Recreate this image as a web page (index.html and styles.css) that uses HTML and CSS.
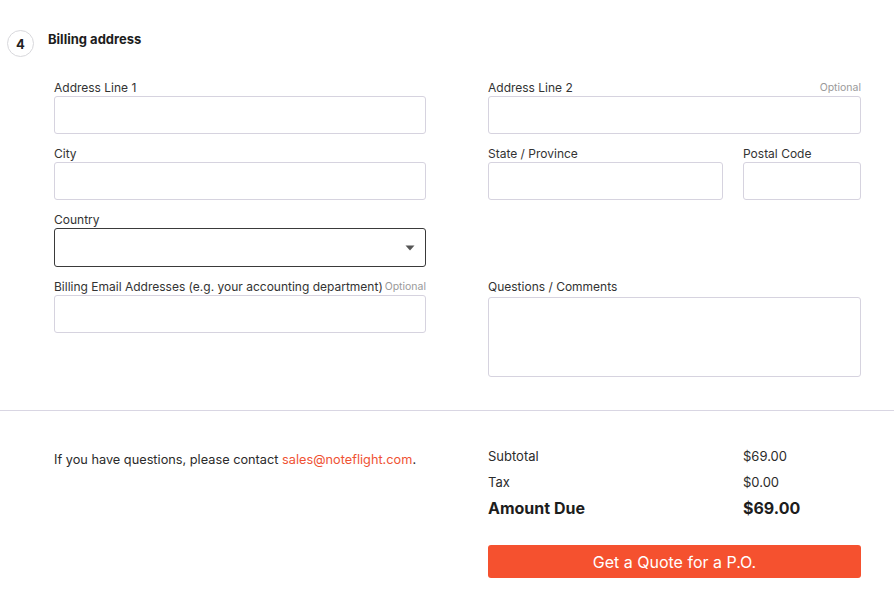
FILE: index.html
```html
<!DOCTYPE html>
<html lang="en">
<head>
<meta charset="utf-8">
<title>Billing address</title>
<link rel="stylesheet" href="styles.css">
</head>
<body>
<section class="step">
  <header class="step-head">
    <span class="step-num">4</span>
    <h2 class="step-title">Billing address</h2>
  </header>
  <div class="form-grid">
    <div class="field">
      <label class="label-row"><span>Address Line 1</span></label>
      <input class="input" type="text">
    </div>
    <div class="field">
      <label class="label-row"><span>Address Line 2</span><span class="optional">Optional</span></label>
      <input class="input" type="text">
    </div>
    <div class="field">
      <label class="label-row"><span>City</span></label>
      <input class="input" type="text">
    </div>
    <div class="split">
      <div class="field state">
        <label class="label-row"><span>State / Province</span></label>
        <input class="input" type="text">
      </div>
      <div class="field postal">
        <label class="label-row"><span>Postal Code</span></label>
        <input class="input" type="text">
      </div>
    </div>
    <div class="field">
      <label class="label-row"><span>Country</span></label>
      <div class="select">
        <svg class="caret" width="10" height="6" viewBox="0 0 10 6"><path d="M0.5 0.5h9L5 5.5z" fill="#555"/></svg>
      </div>
    </div>
    <div class="field empty"></div>
    <div class="field">
      <label class="label-row"><span>Billing Email Addresses (e.g. your accounting department)</span><span class="optional">Optional</span></label>
      <input class="input" type="text">
    </div>
    <div class="field">
      <label class="label-row"><span>Questions / Comments</span></label>
      <textarea class="textarea"></textarea>
    </div>
  </div>
</section>
<div class="divider"></div>
<section class="summary-section">
  <p class="contact">If you have questions, please contact <a href="#" class="link">sales@noteflight.com</a>.</p>
  <div class="summary">
    <div class="totals">
      <span>Subtotal</span><span>$69.00</span>
      <span>Tax</span><span>$0.00</span>
      <span class="due">Amount Due</span><span class="due">$69.00</span>
    </div>
    <button class="quote-btn" type="button">Get a Quote for a P.O.</button>
  </div>
</section>
</body>
</html>
```
FILE: styles.css
```css
* { box-sizing: border-box; }
body {
  margin: 0;
  font-family: "Inter", "Roboto", sans-serif;
  font-size: 13px;
  color: #2b2b2b;
  background: #fff;
}
.step { padding: 30px 33px 33px 7px; }
.step-head {
  display: flex;
  align-items: flex-start;
  gap: 14px;
  height: 48px;
}
.step-num {
  width: 27px;
  height: 27px;
  border: 1px solid #d8d8dc;
  border-radius: 50%;
  display: flex;
  align-items: center;
  justify-content: center;
  font-weight: 700;
  font-size: 13px;
  color: #222;
}
.step-title {
  margin: 1px 0 0;
  font-size: 13px;
  font-weight: 700;
  color: #1d1d1d;
}
.form-grid {
  margin-left: 47px;
  display: grid;
  grid-template-columns: 372px 373px;
  column-gap: 62px;
  row-gap: 10px;
}
.field { display: flex; flex-direction: column; min-width: 0; }
.split {
  display: flex;
  gap: 20px;
}
.state { width: 235px; flex: none; }
.postal { flex: 1; }
.label-row {
  display: flex;
  justify-content: space-between;
  align-items: center;
  height: 18px;
  padding-top: 1px;
  font-size: 12px;
  color: #333;
  white-space: nowrap;
}
.optional { color: #9a9a9a; font-size: 10.5px; }
.input {
  width: 100%;
  min-width: 0;
  height: 38px;
  border: 1px solid #d6d3df;
  border-radius: 3px;
  font: inherit;
  background: #fff;
}
.select {
  height: 39px;
  border: 1px solid #3a3a3a;
  border-radius: 3px;
  display: flex;
  align-items: center;
  justify-content: flex-end;
  padding-right: 10px;
}
.caret { display: block; margin-top: 1px; }
.textarea {
  width: 100%;
  height: 80px;
  margin-top: 2px;
  border: 1px solid #d6d3df;
  border-radius: 3px;
  resize: none;
  font: inherit;
}
.divider { height: 1px; background: #d9d6e3; }
.summary-section {
  display: grid;
  grid-template-columns: 372px 373px;
  column-gap: 62px;
  padding: 32px 33px 0 54px;
}
.contact {
  margin: 7px 0 0;
  line-height: 20px;
  font-size: 12.75px;
  color: #2b2b2b;
}
.link { color: #ef5233; text-decoration: none; }
.totals {
  display: grid;
  grid-template-columns: 255px 118px;
  grid-auto-rows: 26px;
  align-items: center;
}
.due { font-size: 16px; font-weight: 700; color: #1d1d1d; }
.quote-btn {
  margin-top: 24px;
  width: 100%;
  height: 33px;
  border: none;
  border-radius: 3px;
  background: #f5512f;
  color: #fff;
  font-family: inherit;
  font-size: 16px;
}
```
